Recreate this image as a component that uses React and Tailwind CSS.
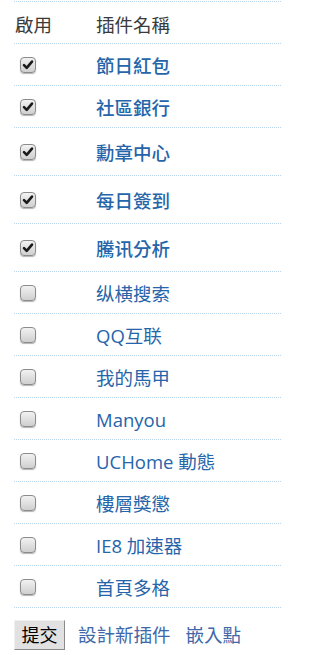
import React from "react";

const rows = [
  { name: "節日紅包", checked: true, h: "h-[42px]" },
  { name: "社區銀行", checked: true, h: "h-[42px]" },
  { name: "勳章中心", checked: true, h: "h-[48px]" },
  { name: "每日簽到", checked: true, h: "h-[48px]" },
  { name: "騰讯分析", checked: true, h: "h-[48px]" },
  { name: "纵横搜索", checked: false, h: "h-[42px]" },
  { name: "QQ互联", checked: false, h: "h-[42px]" },
  { name: "我的馬甲", checked: false, h: "h-[42px]" },
  { name: "Manyou", checked: false, h: "h-[42px]" },
  { name: "UCHome 動態", checked: false, h: "h-[42px]" },
  { name: "樓層獎懲", checked: false, h: "h-[42px]" },
  { name: "IE8 加速器", checked: false, h: "h-[42px]" },
  { name: "首頁多格", checked: false, h: "h-[42px]" },
];

function Box({ checked }) {
  return (
    <div className="w-[16px] h-[16px] rounded-[4px] border border-[#8c8c8c] bg-gradient-to-b from-[#f2f2f2] to-[#cfcfcf] shadow-[0_1px_1px_rgba(0,0,0,0.3)] flex items-center justify-center">
      {checked && (
        <svg width="12" height="12" viewBox="0 0 12 12">
          <path d="M2 6.2 L4.7 8.9 L10 2.6" fill="none" stroke="#1a1a1a" strokeWidth="2.6" strokeLinecap="round" strokeLinejoin="round" />
        </svg>
      )}
    </div>
  );
}

export default function App() {
  return (
    <div
      className="w-[281px] h-[655px] bg-white overflow-hidden pl-[14px] text-[18.5px] leading-none"
      style={{ fontFamily: '"Open Sans", "Noto Sans CJK TC", sans-serif' }}
    >
      <div className="mt-px border-t border-dotted border-[#b9d6ee]">
        <div className="flex items-center h-[42px] border-b border-dotted border-[#b9d6ee] pt-[6px] text-[#3a3a3a]">
          <div className="w-[82px] pl-px">啟用</div>
          <div>插件名稱</div>
        </div>
        {rows.map((r) => (
          <div
            key={r.name}
            className={`flex items-center ${r.h} border-b border-dotted border-[#b9d6ee]`}
          >
            <div className="w-[82px] pl-[6px] flex items-center">
              <Box checked={r.checked} />
            </div>
            <div className={`pt-[3px] text-[#2665aa] ${r.checked ? "font-medium" : "font-normal"}`}>
              {r.name}
            </div>
          </div>
        ))}
      </div>
      <div className="flex items-center mt-[12px]">
        <button className="w-[51px] h-[30px] bg-[#e1e1e1] border border-t-[#f0f0f0] border-l-[#f0f0f0] border-r-[#8a8a8a] border-b-[#8a8a8a] text-black text-[18px] flex items-center justify-center">
          提交
        </button>
        <span className="ml-[13px] text-[#4068a8]">設計新插件</span>
        <span className="ml-[15px] text-[#4068a8]">嵌入點</span>
      </div>
    </div>
  );
}
